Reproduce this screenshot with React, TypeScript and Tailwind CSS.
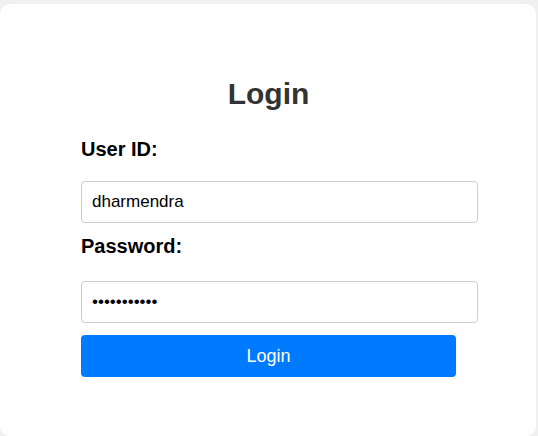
import React, { useState } from 'react';

export default function App() {
  const [userId, setUserId] = useState('dharmendra');
  const [password, setPassword] = useState('dharmendra1');

  const handleSubmit = (e: React.FormEvent) => {
    e.preventDefault();
  };

  return (
    <div className="min-h-[436px] bg-[#f0f0f0] pt-[4px] pr-[2px] font-['Liberation_Sans',Arial,sans-serif]">
      <div className="min-h-[432px] rounded-[10px] bg-white pt-[73px]">
        <form onSubmit={handleSubmit} className="ml-[81px] w-[375px]">
          <h2 className="text-center text-[30px] font-bold leading-[34px] text-[#333333]">Login</h2>
          <label htmlFor="userId" className="mt-[27px] block text-[20px] font-bold leading-[23px] text-black">User ID:</label>
          <input
            id="userId"
            type="text"
            value={userId}
            onChange={e => setUserId(e.target.value)}
            className="mt-[20px] block h-[42px] w-[397px] rounded-[4px] border border-[#cccccc] px-[10px] text-[17px] text-black outline-none"
          />
          <label htmlFor="password" className="mt-[12px] block text-[20px] font-bold leading-[23px] text-black">Password:</label>
          <input
            id="password"
            type="password"
            value={password}
            onChange={e => setPassword(e.target.value)}
            className="mt-[23px] block h-[42px] w-[397px] rounded-[4px] border border-[#cccccc] px-[10px] text-[17px] text-black outline-none"
          />
          <button type="submit" className="mt-[12px] block h-[42px] w-[375px] rounded-[4px] bg-[#007bff] text-[18px] text-white">
            Login
          </button>
        </form>
      </div>
    </div>
  );
}
